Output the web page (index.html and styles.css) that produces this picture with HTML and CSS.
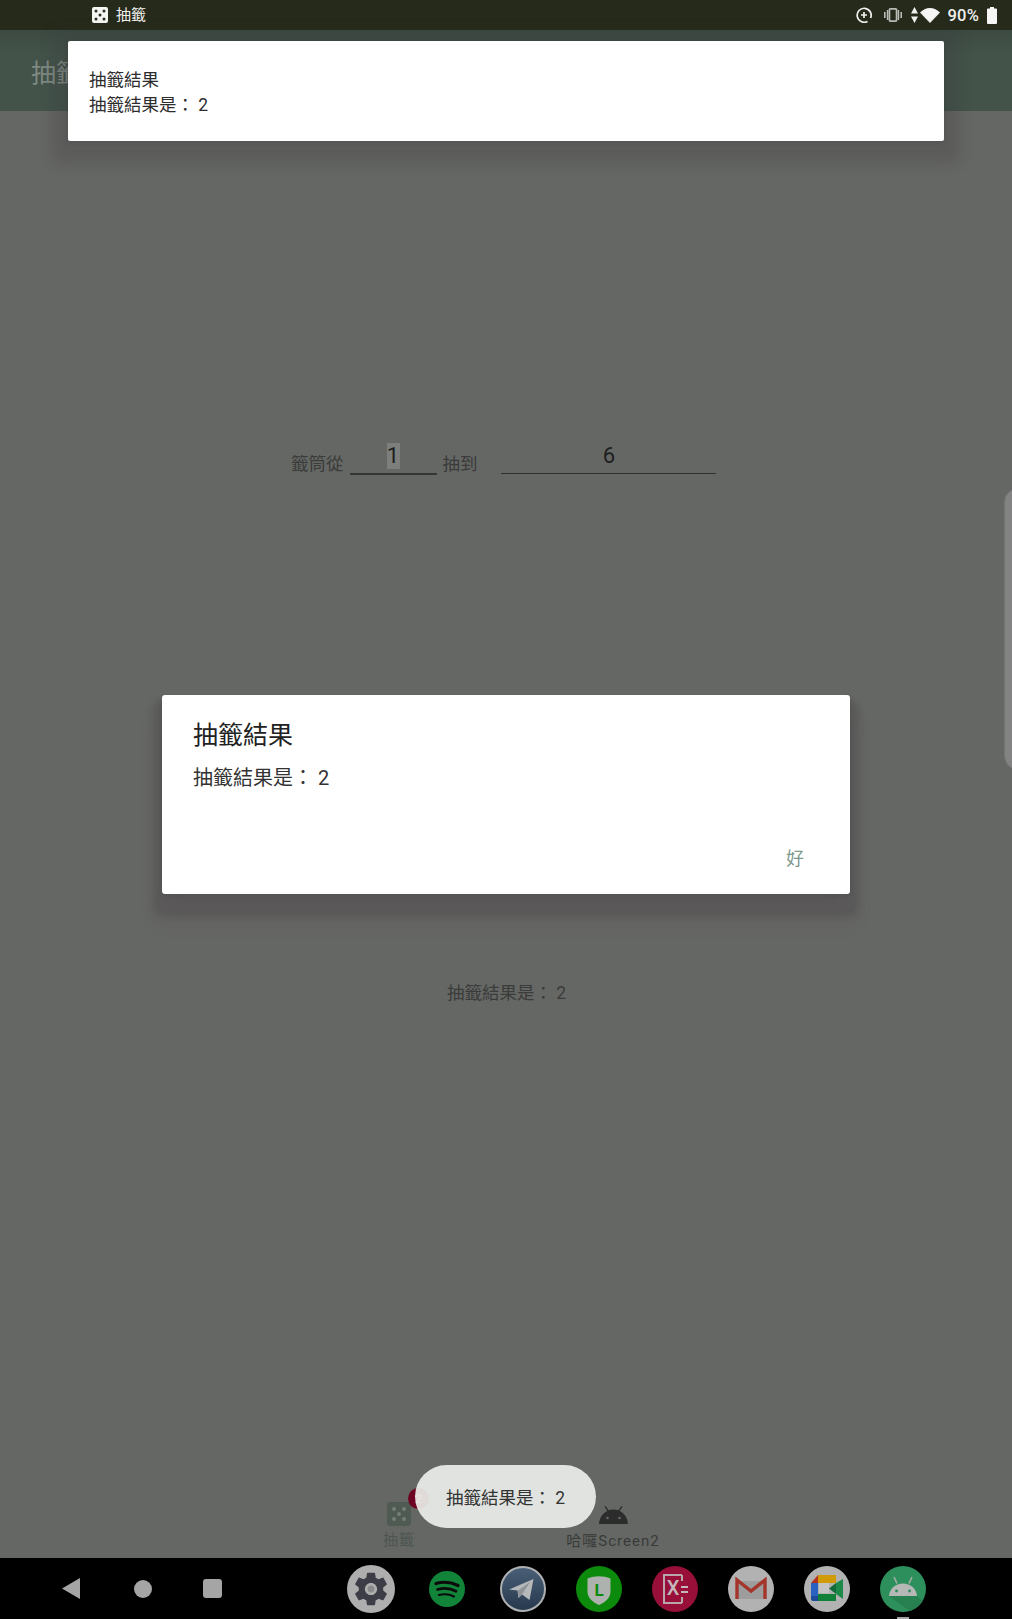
FILE: index.html
```html
<!DOCTYPE html>
<html lang="zh-Hant">
<head>
<meta charset="utf-8">
<title>抽籤</title>
<link rel="stylesheet" href="styles.css">
</head>
<body>
<div class="screen">
  <header class="status">
    <div class="status-left">
      <svg class="dice-small" viewBox="0 0 16 16"><rect width="16" height="16" rx="2" fill="#f4f4f2"/><g fill="#2a2e20"><circle cx="4" cy="4" r="1.5"/><circle cx="12" cy="4" r="1.5"/><circle cx="8" cy="8" r="1.5"/><circle cx="4" cy="12" r="1.5"/><circle cx="12" cy="12" r="1.5"/></g></svg>
      <span class="status-title">抽籤</span>
    </div>
    <div class="status-right">
      <svg class="st-sync" viewBox="0 0 16 16" fill="none" stroke="#f0f0ee" stroke-width="1.7"><path d="M11.500 14.400A7 7 0 1 1 14.600 11"/><path d="M8 5v6M5 8h6"/></svg>
      <svg class="st-vib" viewBox="0 0 18 14"><rect x="5.400" y="0.900" width="7.200" height="12.200" rx="1" fill="none" stroke="#b9bbb6" stroke-width="1.800"/><path d="M0 4h1.600v6H0zM2.800 2h1.400v10H2.800zM13.800 2h1.400v10h-1.400zM16.400 4H18v6h-1.600z" fill="#b9bbb6"/></svg>
      <svg class="st-arrows" viewBox="0 0 7 16" fill="#f0f0ee"><path d="M3.500 0 7 6.500H0zM0 9.500h7L3.500 16z"/></svg>
      <svg class="st-wifi" viewBox="0 0 20 15" fill="#f6f6f4"><path d="M10 15 0 4.600C2.700 1.800 6.200 0 10 0s7.300 1.800 10 4.600z"/></svg>
      <span class="st-batt-text">90%</span>
      <svg class="st-batt" viewBox="0 0 10 17" fill="#f6f6f4"><path d="M3 0h4v1.600h2a1 1 0 0 1 1 1V16a1 1 0 0 1-1 1H1a1 1 0 0 1-1-1V2.600a1 1 0 0 1 1-1h2z"/></svg>
    </div>
  </header>

  <div class="appbar"><span class="appbar-title">抽籤</span></div>

  <main class="content">
    <div class="range-row">
      <span class="range-label">籤筒從</span>
      <div class="field field-from"><span class="selected">1</span></div>
      <span class="range-label">抽到</span>
      <div class="field field-to">6</div>
    </div>
    <p class="result">抽籤結果是： 2</p>
  </main>

  <nav class="tabs">
    <div class="tab tab-first">
      <svg class="tab-dice" viewBox="0 0 24 24"><rect width="24" height="24" rx="3" fill="#4f5a52"/><g fill="#74807a"><circle cx="7" cy="7" r="1.900"/><circle cx="17" cy="7" r="1.900"/><circle cx="12" cy="12" r="1.900"/><circle cx="7" cy="17" r="1.900"/><circle cx="17" cy="17" r="1.900"/></g></svg>
      <span class="tab-label">抽籤</span>
      <span class="badge">2</span>
    </div>
    <div class="tab tab-second">
      <svg class="tab-android" viewBox="0 0 29 18" fill="#2b2c2b"><path d="M0 18C.4 11.600 4 7 8.400 5L5.500.8 6.600 0l3 4.300C11 3.800 12.700 3.500 14.500 3.500s3.500.3 4.900.8l3-4.300 1.100.8L20.600 5C25 7 28.600 11.600 29 18z"/><circle cx="8.500" cy="12" r="1.300" fill="#656764"/><circle cx="20.500" cy="12" r="1.300" fill="#656764"/></svg>
      <span class="tab-label">哈囉Screen2</span>
    </div>
  </nav>

  <footer class="navbar">
    <div class="nav-keys">
      <svg class="key-back" viewBox="0 0 18 21"><path d="M18 0v21L0 10.500z" fill="#a5a5a6"/></svg>
      <span class="key-home"></span>
      <span class="key-recent"></span>
    </div>
    <div class="dock">
      <div class="dock-item">
        <svg class="app app-lg" viewBox="0 0 48 48"><circle cx="24" cy="24" r="24" fill="#aeaeae"/><g transform="translate(3.600 3.600) scale(1.700)"><path fill="#3c3d47" d="M19.140 12.940c.04-.3.06-.61.06-.94 0-.32-.02-.64-.07-.94l2.030-1.580c.18-.14.23-.41.12-.61l-1.920-3.320c-.12-.22-.37-.29-.59-.22l-2.390.96c-.5-.38-1.030-.7-1.620-.94l-.36-2.540c-.04-.24-.24-.41-.48-.41h-3.840c-.24 0-.43.17-.47.41l-.36 2.540c-.59.24-1.130.57-1.620.94l-2.390-.96c-.22-.08-.47 0-.59.22L2.740 8.870c-.12.21-.08.47.12.61l2.030 1.580c-.05.3-.09.63-.09.94s.02.64.07.94l-2.030 1.580c-.18.14-.23.41-.12.61l1.920 3.320c.12.22.37.29.59.22l2.390-.96c.5.38 1.030.7 1.620.94l.36 2.540c.05.24.24.41.48.41h3.840c.24 0 .44-.17.47-.41l.36-2.540c.59-.24 1.130-.56 1.620-.94l2.390.96c.22.08.47 0 .59-.22l1.920-3.320c.12-.22.07-.47-.12-.61l-2.010-1.580zM12 15.600c-1.980 0-3.600-1.620-3.600-3.600s1.620-3.600 3.600-3.600 3.600 1.620 3.600 3.600-1.620 3.600-3.600 3.600z"/></g><circle cx="24" cy="24" r="3.400" fill="#8a8a8f"/></svg>
      </div>
      <div class="dock-item">
        <svg class="app app-sm" viewBox="0 0 36 36" fill="none"><circle cx="18" cy="18" r="18" fill="#12843a"/><g stroke="#0b0b0b" stroke-linecap="round"><path d="M7 12.500c7-2 15-1.500 22 2" stroke-width="3.200"/><path d="M8.500 18.500c6-1.600 13-1.200 18.500 1.800" stroke-width="2.700"/><path d="M10 24c5-1.200 10.500-.9 15 1.500" stroke-width="2.200"/></g></svg>
      </div>
      <div class="dock-item">
        <svg class="app" viewBox="0 0 46 46"><defs><linearGradient id="tg" x1="0" y1="0" x2="0" y2="1"><stop offset="0" stop-color="#4a6078"/><stop offset="1" stop-color="#26384c"/></linearGradient></defs><circle cx="23" cy="23" r="22" fill="url(#tg)" stroke="#aeb0b2" stroke-width="2"/><path d="M9 23.500 33.500 13l-4 21-7.500-5.500-3.500 3.500-1-7.500z" fill="#b6b8ba"/><path d="M18 24.500 30 16l-8 12.500-3.500 3.500z" fill="#8f9398"/></svg>
      </div>
      <div class="dock-item">
        <svg class="app" viewBox="0 0 46 46"><circle cx="23" cy="23" r="23" fill="#0b8a0b"/><path d="M11.500 12.500c7.500-3 15.500-3 23 0v13C34.500 32 29 36.500 23 39c-6-2.500-11.500-7-11.500-13.500z" fill="#aeb2ae"/><text class="line-l" x="23" y="30" text-anchor="middle">L</text></svg>
      </div>
      <div class="dock-item">
        <svg class="app" viewBox="0 0 46 46"><circle cx="23" cy="23" r="23" fill="#98103a"/><path d="M30 9H12v28h18" fill="none" stroke="#b9a6ac" stroke-width="2"/><path d="M30 9v6M30 31v6" stroke="#b9a6ac" stroke-width="2"/><text class="red-x" x="21" y="29" text-anchor="middle">X</text><path d="M29 20h7v2h-7zM29 25h7v2h-7z" fill="#c6b6bb"/></svg>
      </div>
      <div class="dock-item">
        <svg class="app" viewBox="0 0 46 46"><circle cx="23" cy="23" r="23" fill="#b2b2b2"/><path d="M9 15h28v18H9z" fill="#9d9d9d"/><path d="M9 33V14l14 11 14-11v19" fill="none" stroke="#a3352b" stroke-width="3.400"/></svg>
      </div>
      <div class="dock-item">
        <svg class="app" viewBox="0 0 46 46"><circle cx="23" cy="23" r="23" fill="#b2b2b2"/><path d="M15 17h10v10H15z" fill="#c4c4c4"/><path d="M14 9h18v8H14z" fill="#d19a08"/><path d="M14 9v8H7z" fill="#b4331f"/><path d="M7 17h7v13H7z" fill="#2a62c2"/><path d="M7 30h7v5h-5a2 2 0 0 1-2-2z" fill="#1c4a99"/><path d="M14 28h18v7H14z" fill="#13803a"/><path d="M25 22.500 32 17v11z" fill="#146a38"/><path d="M32 17l7-4v20l-7-5z" fill="#1e8a49"/></svg>
      </div>
      <div class="dock-item">
        <svg class="app" viewBox="0 0 46 46"><circle cx="23" cy="23" r="23" fill="#2d8f5b"/><path d="M9 30h28l5.600 5A23 23 0 0 1 30 44.900z" fill="#27804f"/><path d="M9 30h28c-.6-7.500-6.500-12.500-14-12.500S9.600 22.500 9 30z" fill="#b5b8b5"/><path d="M14 11l3 6.500M32 11l-3 6.500" stroke="#a8aca8" stroke-width="1.600"/><circle cx="16.500" cy="25" r="1.400" fill="#2d8f5b"/><circle cx="29.500" cy="25" r="1.400" fill="#2d8f5b"/></svg>
        <span class="dock-dot"></span>
      </div>
    </div>
  </footer>

  <aside class="edge-panel"></aside>

  <section class="headsup">
    <div>抽籤結果</div>
    <div>抽籤結果是： 2</div>
  </section>

  <section class="dialog">
    <h2 class="dialog-title">抽籤結果</h2>
    <p class="dialog-body">抽籤結果是： 2</p>
    <div class="dialog-actions"><span class="dialog-ok">好</span></div>
  </section>

  <div class="toast">抽籤結果是： 2</div>
</div>
</body>
</html>
```

FILE: styles.css
```css
* { box-sizing: border-box; }
html, body { margin: 0; padding: 0; }
body {
  width: 1012px;
  height: 1619px;
  overflow: hidden;
  background: #656764;
  font-family: Roboto, "Noto Sans CJK TC", sans-serif;
  color: #2c2c2c;
}
.screen {
  position: relative;
  width: 1012px;
  height: 1619px;
  display: flex;
  flex-direction: column;
  overflow: hidden;
}

/* status bar */
.status {
  height: 30px;
  flex: none;
  background: #262a1a;
  display: flex;
  align-items: center;
  justify-content: space-between;
  padding: 0 15px 0 92px;
  color: #f0f0ee;
}
.status-left { display: flex; align-items: center; gap: 8px; font-size: 15px; }
.status-title { line-height: 30px; }
.dice-small { width: 16px; height: 16px; }
.status-right { display: flex; align-items: center; }
.st-sync { width: 16px; height: 16px; margin-right: 12px; }
.st-vib { width: 18px; height: 14px; margin-right: 9px; }
.st-arrows { width: 7px; height: 16px; margin-right: 2px; }
.st-wifi { width: 20px; height: 15px; margin-right: 7px; }
.st-batt-text { font-size: 16.500px; font-weight: 500; margin-right: 8px; letter-spacing: 0.2px; }
.st-batt { width: 10px; height: 17px; }

/* app bar */
.appbar {
  height: 81px;
  flex: none;
  display: flex;
  align-items: center;
  padding-left: 31px;
  background: linear-gradient(#3c4a42, #43534a 30%, #43534a);
  color: #7f8a83;
  font-size: 25px;
}

/* content */
.content {
  flex: 1;
  padding-top: 328px;
  display: flex;
  flex-direction: column;
  align-items: center;
}
.range-row {
  display: flex;
  align-items: flex-end;
  height: 36px;
  width: 1012px;
  padding-left: 291px;
  color: #3a3b3a;
}
.range-label { font-size: 17.500px; line-height: 26px; margin-bottom: -2px; }
.field {
  font-size: 22px;
  line-height: 30px;
  text-align: center;
  color: #1e1e1e;
  height: 35px;
}
.field-from {
  width: 87px;
  margin: 0 6px;
  border-bottom: 2px solid #343534;
}
.field-to {
  width: 215px;
  height: 34px;
  margin: 0 0 1px 23px;
  padding: 1px 0 0 2px;
  border-bottom: 1.500px solid #2f302f;
}
.selected { display: inline-block; background: #7d7f7c; width: 13px; height: 26px; line-height: 26px; margin-top: 3px; }
.result {
  margin: 505px 0 0;
  font-size: 17.500px;
  line-height: 26px;
  color: #3a3b3a;
  padding-left: 1px;
}

/* tabs */
.tabs {
  position: relative;
  height: 64px;
  flex: none;
  display: flex;
  justify-content: center;
  color: #3f4340;
}
.tab { position: relative; display: flex; flex-direction: column; align-items: center; }
.tab-first { width: 120px; margin-right: 94px; padding-top: 8px; }
.tab-second { width: 120px; padding-top: 12px; }
.tab-dice { width: 24px; height: 24px; }
.tab-android { width: 29px; height: 18px; }
.tab-label { font-size: 15px; line-height: 20px; margin-top: 4px; color: #4c5550; white-space: nowrap; letter-spacing: 1px; }
.tab-second .tab-label { margin-top: 7px; color: #393b39; }
.badge {
  position: absolute;
  left: 69px;
  top: -6px;
  width: 21px;
  height: 21px;
  border-radius: 50%;
  background: #6d0322;
  color: #b88a96;
  font-size: 13px;
  line-height: 21px;
  text-align: center;
}

/* nav */
.navbar {
  height: 61px;
  flex: none;
  background: #000;
  display: flex;
  align-items: center;
}
.nav-keys { display: flex; align-items: center; padding-left: 62px; width: 333px; }
.key-back { width: 18px; height: 21px; }
.key-home { width: 18px; height: 18px; border-radius: 50%; background: #a5a5a6; margin-left: 54px; }
.key-recent { width: 19px; height: 19px; border-radius: 3px; background: #a5a5a6; margin-left: 51px; }
.dock { display: grid; grid-template-columns: repeat(8, 76px); }
.dock-item { position: relative; display: flex; justify-content: center; align-items: center; height: 61px; }
.app { width: 46px; height: 46px; }
.app-lg { width: 48px; height: 48px; }
.app-sm { width: 36px; height: 36px; }
.dock-dot {
  position: absolute;
  left: 32px;
  bottom: 0;
  width: 12px;
  height: 2px;
  background: #a5a5a6;
}
.line-l { font: 700 17px Roboto, sans-serif; fill: #0b8a0b; }
.red-x { font: 500 20px Roboto, sans-serif; fill: #c6b6bb; }

/* overlays */
.edge-panel {
  position: absolute;
  right: -20px;
  top: 488px;
  width: 28px;
  height: 282px;
  border-radius: 14px;
  background: #838383;
  border: 1px solid #727372;
}
.headsup {
  position: absolute;
  left: 68px;
  top: 41px;
  width: 876px;
  height: 100px;
  padding: 27px 21px 0;
  background: #fff;
  border-radius: 2px;
  font-size: 17.500px;
  line-height: 25px;
  color: #2d2d2d;
  box-shadow: 0 2px 4px rgba(50, 50, 50, .2), 0 6px 14px 16px rgba(55, 50, 55, .2);
}
.dialog {
  position: absolute;
  left: 162px;
  top: 695px;
  width: 688px;
  height: 199px;
  padding: 25px 31px 0;
  background: #fff;
  border-radius: 3px;
  display: flex;
  flex-direction: column;
  box-shadow: 0 2px 4px rgba(50, 50, 50, .15), 0 14px 6px 9px rgba(45, 40, 45, .17), 0 24px 20px 4px rgba(90, 60, 80, .1);
}
.dialog-title { margin: 0; font-size: 25px; line-height: 32px; font-weight: 400; color: #222; }
.dialog-body { margin: 12px 0 0; font-size: 20px; line-height: 28px; color: #333; }
.dialog-actions { margin-top: auto; padding: 0 15px 21px 0; text-align: right; line-height: 26px; }
.dialog-ok { font-size: 18px; color: #7f9a8e; }
.toast {
  position: absolute;
  left: 415px;
  top: 1465px;
  width: 181px;
  height: 63px;
  border-radius: 32px;
  background: rgba(234, 238, 233, .92);
  color: #333;
  font-size: 17.500px;
  display: flex;
  align-items: center;
  justify-content: center;
}
```
